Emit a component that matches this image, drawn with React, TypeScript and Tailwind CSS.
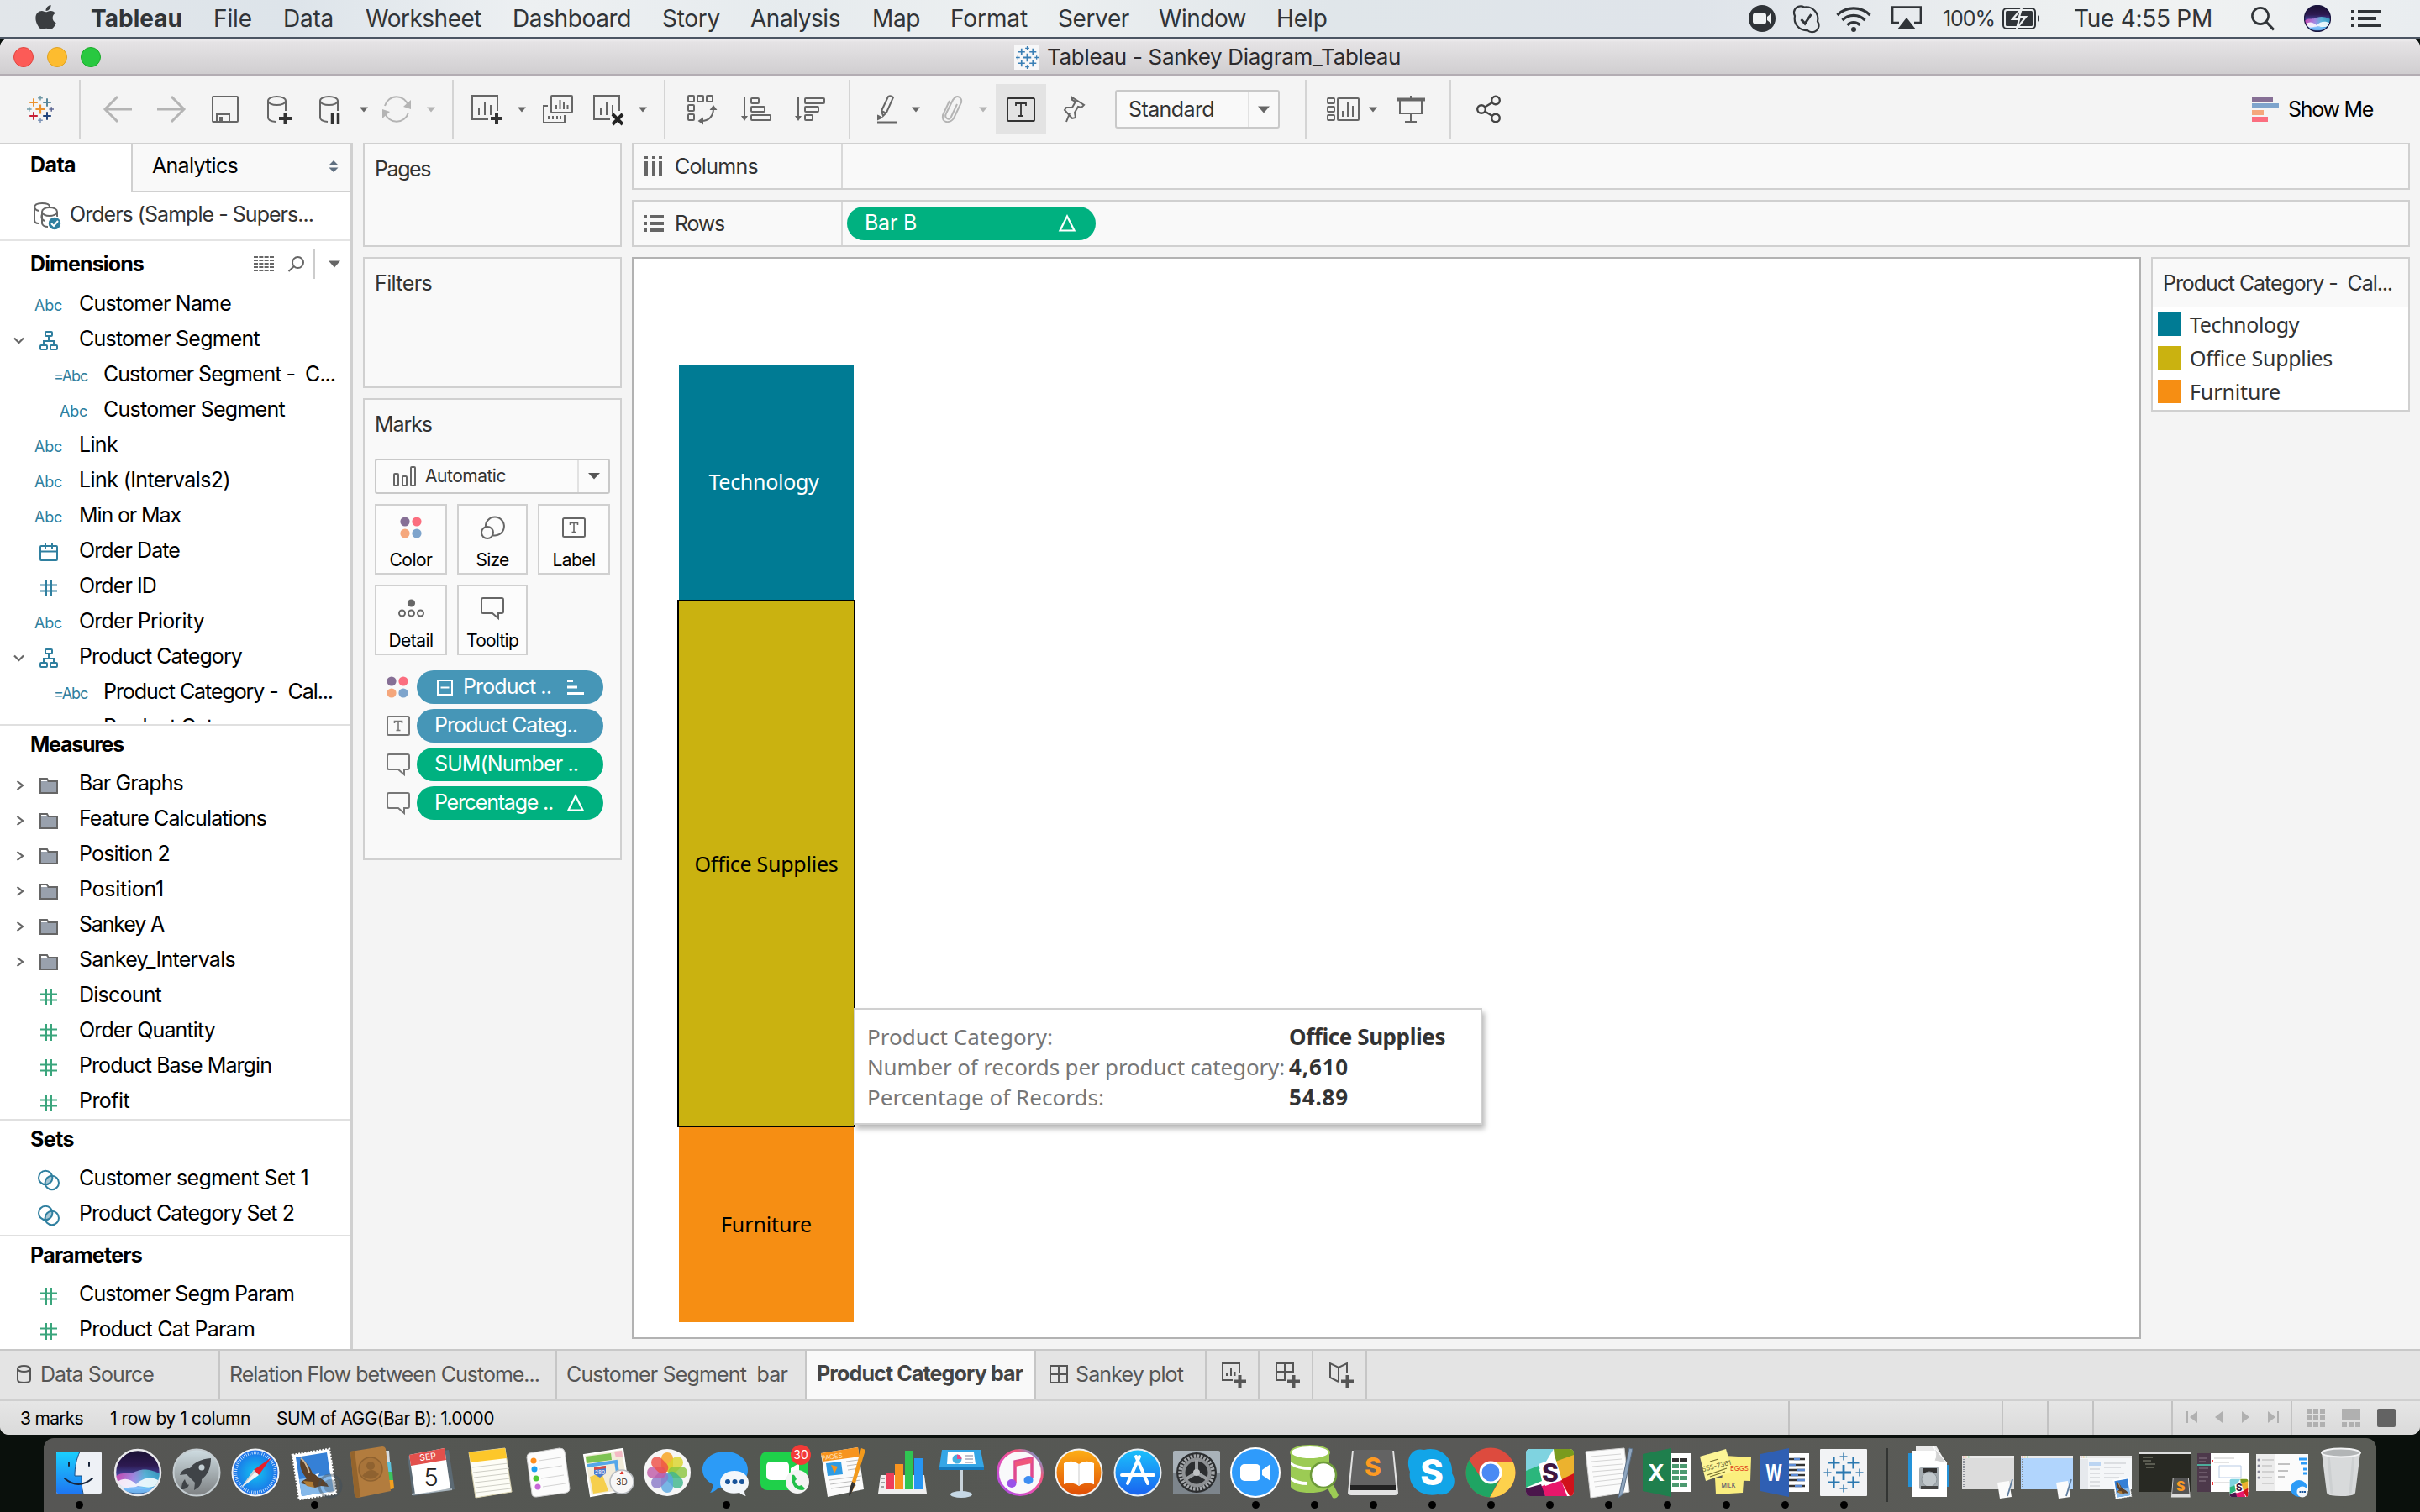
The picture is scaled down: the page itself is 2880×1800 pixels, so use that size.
import React, { useLayoutEffect, useRef } from "react";
import { FaApple } from "react-icons/fa";

/* Text whose letter spacing is adjusted so that it takes a given width. */
function Fit({ w, children, className = "" }: { w: number; children: string; className?: string }) {
  const ref = useRef<HTMLSpanElement>(null);
  useLayoutEffect(() => {
    const el = ref.current;
    if (!el) return;
    el.style.letterSpacing = "0px";
    const natural = el.getBoundingClientRect().width;
    el.style.letterSpacing = `${(w + 2 - natural) / children.length}px`;
  }, [w, children]);
  return (
    <span className={`inline-block shrink-0 leading-none ${className}`}>
      <span ref={ref} className="-mx-[1px] inline-block whitespace-pre leading-none">
        {children}
      </span>
    </span>
  );
}

type SvgProps = { w: number; h: number; className?: string; children: React.ReactNode; sw?: number };
function Ic({ w, h, className = "", children, sw = 2 }: SvgProps) {
  return (
    <svg width={w} height={h} viewBox={`0 0 ${w} ${h}`} fill="none" stroke="currentColor" strokeWidth={sw} className={`block shrink-0 overflow-visible ${className}`}>
      {children}
    </svg>
  );
}

const Caret = ({ className = "" }: { className?: string }) => (
  <Ic w={10} h={7} className={className}>
    <path d="M0 0.5h10l-5 6z" fill="currentColor" stroke="none" />
  </Ic>
);

function plus(x: number, y: number, r: number, c: string, s: number) {
  return <path key={`${x}-${y}`} d={`M${x - r} ${y}h${2 * r}M${x} ${y - r}v${2 * r}`} stroke={c} strokeWidth={s} />;
}

function TableauLogo({ size, mono, className = "" }: { size: number; mono?: string; className?: string }) {
  const c = (v: string) => mono ?? v;
  return (
    <svg width={size} height={size} viewBox="0 0 32 32" className={`block shrink-0 ${className}`}>
      {plus(16, 16, 5.6, c("#eb912b"), 2.2)}
      {plus(8, 8, 4.8, c("#eb912c"), 2)}
      {plus(24, 8, 4.8, c("#59879b"), 2)}
      {plus(8, 24, 4.8, c("#c72035"), 2)}
      {plus(24, 24, 4.8, c("#1f447e"), 2)}
      {plus(16, 2.8, 2.8, c("#7099a6"), 1.5)}
      {plus(16, 29.2, 2.8, c("#7b92b5"), 1.5)}
      {plus(2.8, 16, 2.8, c("#7099a6"), 1.5)}
      {plus(29.2, 16, 2.8, c("#5c6692"), 1.5)}
    </svg>
  );
}

/* ---------- menu bar ---------- */
const menus: [string, number, string][] = [
  ["File", 44, "ml-[39px]"],
  ["Data", 58, "ml-[39px]"],
  ["Worksheet", 136, "ml-[40px]"],
  ["Dashboard", 139, "ml-[39px]"],
  ["Story", 67, "ml-[39px]"],
  ["Analysis", 105, "ml-[38px]"],
  ["Map", 55, "ml-[40px]"],
  ["Format", 90, "ml-[38px]"],
  ["Server", 83, "ml-[38px]"],
  ["Window", 102, "ml-[37px]"],
  ["Help", 59, "ml-[38px]"],
];

function MenuBar() {
  return (
    <div className="flex h-[46px] items-center border-b-2 border-[#4b5563] bg-[linear-gradient(90deg,#e2e6ea_0%,#dde4ea_12%,#edf0f2_22%,#e6ebee_33%,#edf0f1_42%,#e0e6ea_55%,#dfe4ea_70%,#eceff0_84%,#f0f2f2_90%,#e9edf0_100%)] text-[28px] text-[#303438]">
      <FaApple className="-mt-[4px] ml-[40px] h-[33px] w-[29px] shrink-0 text-[#3a3d40]" />
      <Fit w={107} className="ml-[40px] font-bold">Tableau</Fit>
      {menus.map(([t, w, ml]) => (
        <div key={t} className={`flex ${ml}`}>
          <Fit w={w}>{t}</Fit>
        </div>
      ))}
      <div className="mr-[46px] ml-auto flex h-full items-center">
        <Ic w={32} h={32}>
          <circle cx="16" cy="16" r="16" fill="#2f3337" stroke="none" />
          <rect x="5" y="9.5" width="16" height="13" rx="3" fill="#eef1f2" stroke="none" />
          <path d="M22 14l5-4v12l-5-4z" fill="#eef1f2" stroke="none" />
        </Ic>
        <Ic w={33} h={33} className="ml-[20px]" sw={2.2}>
          <path d="M3 13a9 9 0 0 1-1-5 8 8 0 0 1 12-5.500a14 14 0 0 1 16 17 8 8 0 0 1-12 10.500a14 14 0 0 1-15-17z" />
          <path d="M10.500 17l4.500 5 7.500-11" strokeWidth="3" />
        </Ic>
        <Ic w={42} h={31} className="ml-[19px]" sw={3.2}>
          <path d="M1.500 11a27.500 27.500 0 0 1 39 0M7.500 17a19 19 0 0 1 27 0M13.500 22.800a10.600 10.600 0 0 1 15 0" />
          <circle cx="21" cy="28" r="3" fill="currentColor" stroke="none" />
        </Ic>
        <Ic w={36} h={30} className="ml-[24px]" sw={2.4}>
          <path d="M9 20H1.200V1.500h33.600V20H27" />
          <path d="M18 14l11 14H7z" fill="currentColor" stroke="none" />
        </Ic>
        <Fit w={60} className="ml-[26px] text-[25px]">100%</Fit>
        <Ic w={46} h={26} className="ml-[10px]" sw={2}>
          <rect x="1" y="1" width="38" height="24" rx="4" />
          <rect x="4" y="4" width="32" height="18" rx="1.500" fill="currentColor" stroke="none" />
          <path d="M23 1L12 14h8l-3 11 11-14h-8z" fill="currentColor" stroke="#eceff0" strokeWidth="2.200" />
          <path d="M42 9q3.500 4 0 8z" fill="currentColor" stroke="none" />
        </Ic>
        <Fit w={163} className="ml-[40px]">Tue 4:55 PM</Fit>
        <Ic w={28} h={28} className="ml-[47px]" sw={2.6}>
          <circle cx="11" cy="11" r="9.600" />
          <path d="M18 18l9 9.500" strokeWidth="3.200" />
        </Ic>
        <svg width="32" height="32" viewBox="0 0 56 56" className="ml-[35px] block">
          <SiriArt rim="#1b1640" />
        </svg>
        <Ic w={36} h={20} className="ml-[24px]" sw={4}>
          <path d="M0 2h4M8 2h28M0 10h4M8 10h22M0 18h4M8 18h28" />
        </Ic>
      </div>
    </div>
  );
}

function SiriArt({ rim = "#e9e9ec" }: { rim?: string }) {
  return (
    <>
      <defs>
        <linearGradient id="siri" x1="0" y1="0" x2="0" y2="1">
          <stop offset="0" stopColor="#191033" />
          <stop offset="0.35" stopColor="#2d1a50" />
          <stop offset="0.6" stopColor="#4a4fb0" />
          <stop offset="0.85" stopColor="#4b95e0" />
          <stop offset="1" stopColor="#25406f" />
        </linearGradient>
        <linearGradient id="siriwave" x1="0" y1="0" x2="1" y2="0">
          <stop offset="0" stopColor="#ff3fae" />
          <stop offset="0.4" stopColor="#c79cf5" />
          <stop offset="0.65" stopColor="#5fe0ee" />
          <stop offset="1" stopColor="#2fb7c9" />
        </linearGradient>
        <clipPath id="sirc"><circle cx="28" cy="28" r="26" /></clipPath>
      </defs>
      <circle cx="28" cy="28" r="27" fill="url(#siri)" stroke={rim} strokeWidth="2.500" />
      <g clipPath="url(#sirc)">
        <path d="M0 34C8 26 16 30 22 28s14-8 34 2v10c-10 6-16 8-28 8S8 46 0 34z" fill="url(#siriwave)" opacity="0.7" />
        <path d="M2 40c8-6 16-6 24 2 8-8 18-10 28-4-6 10-14 8-26 6-10 5-20 5-26-4z" fill="#fff" opacity="0.85" />
        <path d="M10 48c8-4 26-4 36 0-8 6-28 6-36 0z" fill="#7fc4ff" opacity="0.8" />
      </g>
    </>
  );
}

/* ---------- title bar ---------- */
function TitleBar() {
  return (
    <div className="flex h-[44px] items-center border-b-2 border-[#b3adb3] bg-[linear-gradient(180deg,#f2f0f2_0%,#e5e3e5_10%,#d0ced0_100%)] pt-[2px]">
      <div className="ml-[16px] flex gap-[16px]">
        <div className="size-[24px] rounded-full border border-[#e0443e] bg-[#fc5b57]" />
        <div className="size-[24px] rounded-full border border-[#dea123] bg-[#fdbc2f]" />
        <div className="size-[24px] rounded-full border border-[#1aab29] bg-[#28c840]" />
      </div>
      <div className="ml-[1087px] flex size-[30px] items-center justify-center bg-[#f7f7f8]">
        <TableauLogo size={27} mono="#3a7fb5" />
      </div>
      <Fit w={419} className="ml-[10px] text-[26px] text-[#2c2a2c]">Tableau - Sankey Diagram_Tableau</Fit>
    </div>
  );
}

/* ---------- toolbar ---------- */
const Sep = ({ className }: { className: string }) => <div className={`h-[70px] w-[2px] shrink-0 bg-[#d4d4d4] ${className}`} />;

const Share = () => (
  <Ic w={29} h={32} className="ml-[30px] text-[#444]" sw={2.4}>
    <circle cx="6" cy="16" r="4.800" />
    <circle cx="23" cy="5.500" r="4.800" />
    <circle cx="23" cy="26.500" r="4.800" />
    <path d="M10 13.500L19 8M10 18.500l9 5.500" />
  </Ic>
);

function Toolbar() {
  return (
    <div className="flex h-[80px] items-center text-[#666]">
      <TableauLogo size={32} className="ml-[32px]" />
      <Sep className="ml-[30px]" />
      <Ic w={34} h={32} className="ml-[27px] text-[#b4b4b4]" sw={3}>
        <path d="M34 16H2M17 1L2 16l15 15" />
      </Ic>
      <Ic w={34} h={32} className="ml-[30px] text-[#b4b4b4]" sw={3}>
        <path d="M0 16h32M17 1l15 15-15 15" />
      </Ic>
      <Ic w={32} h={32} className="ml-[31px]">
        <rect x="1" y="1" width="30" height="30" rx="1" />
        <path d="M6 31v-9h15v9M10 31v-5h2v5z" />
      </Ic>
      <Ic w={30} h={33} className="ml-[34px]">
        <ellipse cx="11.500" cy="6" rx="10.500" ry="5" />
        <path d="M1 6v20c0 3 4 4.500 9 5M22 6v12" />
        <path d="M14 27h15M21.500 20v14" stroke="#333" strokeWidth="4" />
      </Ic>
      <Ic w={26} h={33} className="ml-[32px]">
        <ellipse cx="11.500" cy="6" rx="10.500" ry="5" />
        <path d="M1 6v20c0 3 4 4.500 9 5M22 6v12" />
        <path d="M15.500 21v13M22.500 21v13" stroke="#333" strokeWidth="3.500" />
      </Ic>
      <Caret className="ml-[22px]" />
      <Ic w={34} h={32} className="ml-[17px] text-[#b4b4b4]">
        <path d="M3 12A14.500 14.500 0 0 1 31 12M31 20A14.500 14.500 0 0 1 3 20" />
        <path d="M34 5v11l-9-3zM0 27V16l9 3z" fill="currentColor" stroke="none" />
      </Ic>
      <Caret className="ml-[19px] text-[#b4b4b4]" />
      <Sep className="ml-[20px]" />
      <Ic w={37} h={34} className="ml-[21px]">
        <path d="M20 29H1V1h30v18M9 24v-8M16 24V8M23 24v-12" />
        <path d="M23 28h14M30 21v14" stroke="#333" strokeWidth="4" />
      </Ic>
      <Caret className="ml-[18px]" />
      <Ic w={36} h={34} className="ml-[20px]">
        <rect x="10" y="1" width="25" height="20" rx="1" />
        <path d="M16 17v-5M20.500 17V6M25 17V9M29.500 17v-5M6 13H1v20h25v-9M7 29v-4M12 29v-4M17 29v-4M21 29v-4" />
      </Ic>
      <Ic w={37} h={34} className="ml-[24px]">
        <path d="M20 29H1V1h30v18M9 24v-8M16 24V8M23 24v-12" />
        <path d="M23 23l12 12M35 23L23 35" stroke="#222" strokeWidth="4" />
      </Ic>
      <Caret className="ml-[17px]" />
      <Sep className="ml-[20px]" />
      <Ic w={35} h={34} className="ml-[26px]">
        <rect x="1" y="1" width="7" height="7" rx="1" />
        <rect x="12" y="1" width="7" height="7" rx="1" />
        <rect x="23" y="1" width="7" height="7" rx="1" />
        <rect x="1" y="12" width="7" height="7" rx="1" />
        <rect x="1" y="23" width="7" height="7" rx="1" />
        <path d="M17 31c8 0 14-5 14-15" />
        <path d="M26.500 18l4.500-6 4.500 6zM19 26.500L12.500 31l6.500 4.500z" fill="currentColor" stroke="none" />
      </Ic>
      <Ic w={36} h={30} className="ml-[29px]">
        <path d="M4 0v26" />
        <path d="M0 23h8l-4 6z" fill="currentColor" stroke="none" />
        <rect x="12" y="2" width="9" height="6" rx="1" />
        <rect x="12" y="12" width="16" height="6" rx="1" />
        <rect x="12" y="22" width="23" height="6" rx="1" />
      </Ic>
      <Ic w={36} h={30} className="ml-[28px]">
        <path d="M4 0v26" />
        <path d="M0 23h8l-4 6z" fill="currentColor" stroke="none" />
        <rect x="12" y="2" width="23" height="6" rx="1" />
        <rect x="12" y="12" width="16" height="6" rx="1" />
        <rect x="12" y="22" width="9" height="6" rx="1" />
      </Ic>
      <Sep className="ml-[28px]" />
      <Ic w={24} h={34} className="ml-[32px]">
        <path d="M5 19L13 2q3-2 6 1l-8 18-4 4z M5 19l6 3" />
        <path d="M1 25l4 2-4 2z" fill="currentColor" />
        <path d="M0 33h23" strokeWidth="3" />
      </Ic>
      <Caret className="ml-[17px]" />
      <Ic w={24} h={32} className="ml-[26px] text-[#b4b4b4]">
        <path d="M18 10L11 25q-2 4-5 2t-1-6L13 5q4-6 8-3t1 8L14 27q-4 5-9 4t-4-8L9 6" />
      </Ic>
      <Caret className="ml-[20px] text-[#b4b4b4]" />
      <div className="ml-[10px] flex size-[60px] shrink-0 items-center justify-center bg-[#e3e3e3] text-[#333]">
        <Ic w={34} h={29}>
          <rect x="1" y="1" width="32" height="27" rx="1.500" />
          <path d="M11 10V7h12v3M17 7v15M14 22h6" strokeWidth="1.800" />
        </Ic>
      </div>
      <Ic w={26} h={32} className="ml-[20px]">
        <path d="M11 2l14 9-3 3-4-1-4 7 1 6-4 1L2 17l2-3 7 0 4-7-4-2zM8 21L4 31" />
      </Ic>
      <div className="ml-[36px] flex h-[46px] w-[196px] shrink-0 items-center rounded-[3px] border-2 border-[#c9c9c9] bg-[#f9f9f9]">
        <Fit w={100} className="ml-[15px] text-[25px] text-[#333]">Standard</Fit>
        <div className="ml-auto flex h-full w-[36px] items-center justify-center border-l-2 border-[#e2e2e2]">
          <Ic w={14} h={9}>
            <path d="M0 0.500h14l-7 8z" fill="currentColor" stroke="none" />
          </Ic>
        </div>
      </div>
      <Sep className="ml-[30px]" />
      <Ic w={39} h={28} className="ml-[24px]">
        <rect x="1" y="1" width="8" height="6" rx="1" />
        <rect x="1" y="11" width="8" height="6" rx="1" />
        <rect x="1" y="21" width="8" height="6" rx="1" />
        <rect x="13" y="1" width="25" height="26" rx="1" />
        <path d="M19 23v-7M25 23V6M31 23V10" />
      </Ic>
      <Caret className="ml-[11px]" />
      <Ic w={34} h={32} className="ml-[23px]">
        <path d="M0 4.500h34" strokeWidth="4" />
        <path d="M17 0v4M4 6v15h26V6M17 21v10M10 31h14" />
      </Ic>
      <Sep className="ml-[29px]" />
      <Share />
      <div className="mr-[57px] ml-auto flex items-center">
        <Ic w={33} h={30} sw={6}>
          <path d="M0 3h25" stroke="#866f95" />
          <path d="M0 11h32" stroke="#7ea4cc" />
          <path d="M0 19h14" stroke="#f5a77c" />
          <path d="M0 27h19" stroke="#fb6e7f" />
        </Ic>
        <Fit w={99} className="ml-[11px] text-[25px] text-black">Show Me</Fit>
      </div>
    </div>
  );
}

/* ---------- data pane ---------- */
type Kind = "abc" | "eabc" | "nabc" | "hier" | "date" | "num" | "gnum" | "folder" | "set";

function FieldIcon({ kind }: { kind: Kind }) {
  switch (kind) {
    case "abc":
      return <Fit w={31} className="mt-[4px] ml-[42px] text-[18px]">Abc</Fit>;
    case "nabc":
      return <Fit w={31} className="mt-[4px] ml-[72px] text-[18px]">Abc</Fit>;
    case "eabc":
      return <Fit w={38} className="mt-[4px] ml-[65px] text-[18px]">=Abc</Fit>;
    case "hier":
      return (
        <>
          <Ic w={13} h={9} className="mt-[2px] ml-[16px] text-[#666]" sw={2.2}>
            <path d="M1 1.500l5.500 5.500L12 1.500" />
          </Ic>
          <Ic w={22} h={23} className="mt-[2px] ml-[18px]">
            <rect x="7" y="1" width="8" height="5" rx="1" />
            <path d="M11 6v6M5 17v-5h12v5" />
            <rect x="1" y="17" width="8" height="5" rx="1" />
            <rect x="13" y="17" width="8" height="5" rx="1" />
          </Ic>
        </>
      );
    case "date":
      return (
        <Ic w={22} h={20} className="mt-[2px] ml-[47px]">
          <rect x="1" y="3" width="20" height="17" rx="1" />
          <path d="M1 9.500h20M7 0v6M15 0v6" />
        </Ic>
      );
    case "num":
    case "gnum":
      return (
        <Ic w={20} h={20} className="mt-[4px] ml-[48px]">
          <path d="M0 6.500h20M0 13.500h20M7 0v20M13 0v20" />
        </Ic>
      );
    case "folder":
      return (
        <>
          <Ic w={8} h={12} className="mt-[3px] ml-[20px] text-[#666]" sw={2.2}>
            <path d="M0.500 1L7 6l-6.500 5" />
          </Ic>
          <Ic w={22} h={20} className="mt-[4px] ml-[19px] text-[#666]">
            <path d="M1 19V2h8l1.500 3H21v14z" fill="#99a1ad" />
            <path d="M2 3h6l1.500 2H2z" fill="#fff" stroke="none" />
          </Ic>
        </>
      );
    default:
      return (
        <Ic w={26} h={24} className="mt-[4px] ml-[45px]">
          <path d="M17 7a8 8 0 0 1-8 9.500 8 8 0 0 1 8-9.500z" fill="#a9c8d6" stroke="none" />
          <circle cx="9.200" cy="9" r="8.200" />
          <circle cx="16.800" cy="15" r="8.200" />
        </Ic>
      );
  }
}

type Field = [Kind, string, number];
const dimensions: Field[] = [
  ["abc", "Customer Name", 179],
  ["hier", "Customer Segment", 213],
  ["eabc", "Customer Segment -  C...", 274],
  ["nabc", "Customer Segment", 214],
  ["abc", "Link", 44],
  ["abc", "Link (Intervals2)", 178],
  ["abc", "Min or Max", 119],
  ["date", "Order Date", 118],
  ["num", "Order ID", 90],
  ["abc", "Order Priority", 147],
  ["hier", "Product Category", 192],
  ["eabc", "Product Category -  Cal...", 271],
  ["nabc", "Product Category", 192],
];
const measures: Field[] = [
  ["folder", "Bar Graphs", 122],
  ["folder", "Feature Calculations", 221],
  ["folder", "Position 2", 106],
  ["folder", "Position1", 99],
  ["folder", "Sankey A", 99],
  ["folder", "Sankey_Intervals", 184],
  ["gnum", "Discount", 96],
  ["gnum", "Order Quantity", 160],
  ["gnum", "Product Base Margin", 227],
  ["gnum", "Profit", 58],
];
const sets: Field[] = [
  ["set", "Customer segment Set 1", 271],
  ["set", "Product Category Set 2", 254],
];
const params: Field[] = [
  ["gnum", "Customer Segm Param", 254],
  ["gnum", "Product Cat Param", 207],
];

function Fields({ items }: { items: Field[] }) {
  return (
    <>
      {items.map(([kind, text, w], i) => (
        <div key={i} className="flex h-[42px] shrink-0 items-center">
          <div className={`flex shrink-0 items-center ${kind === "eabc" || kind === "nabc" ? "w-[124px]" : "w-[95px]"} ${kind === "gnum" ? "text-[#3aa57c]" : "text-[#2f7f9f]"}`}>
            <FieldIcon kind={kind} />
          </div>
          <Fit w={w} className="-mt-[1px] text-[25px] text-black">{text}</Fit>
        </div>
      ))}
    </>
  );
}

const Head = ({ t, w }: { t: string; w: number }) => (
  <div className="flex h-[48px] shrink-0 items-center pl-[37px]">
    <Fit w={w} className="-mt-[3px] text-[25px] font-bold text-black">{t}</Fit>
  </div>
);

function DataPane() {
  return (
    <div className="flex h-full w-[420px] shrink-0 flex-col border-t-2 border-r-[3px] border-[#d0d0d0] bg-white">
      <div className="flex h-[57px] shrink-0">
        <div className="flex w-[156px] items-center pb-[9px] pl-[37px]">
          <Fit w={52} className="text-[25px] font-bold text-black">Data</Fit>
        </div>
        <div className="flex flex-1 items-center border-b-2 border-l-2 border-[#d0d0d0] bg-[#f9f9f9] pb-[4px] pl-[24px]">
          <Fit w={100} className="text-[25px] text-black">Analytics</Fit>
          <Ic w={12} h={14} className="mr-[14px] ml-auto text-[#5f6f80]">
            <path d="M6 0l5.500 5.500H0.500zM6 14l5.500-5.500H0.500z" fill="currentColor" stroke="none" />
          </Ic>
        </div>
      </div>
      <div className="flex h-[58px] shrink-0 items-center border-b-2 border-[#e4e4e4] pl-[40px]">
        <Ic w={33} h={33} className="text-[#666]">
          <path d="M1 6v15q0 4 5 4M1 6q0-5 9-5t9 4M1 6q1 3 5 4" />
          <ellipse cx="19" cy="11" rx="9" ry="5" />
          <path d="M10 11v14q1 4 7 4M28 11v6M10 14q-2 6 3 8" />
          <circle cx="25" cy="25" r="8" fill="#2f7f9f" stroke="#fff" strokeWidth="1.500" />
          <path d="M21 25l3 3 5-6" stroke="#fff" />
        </Ic>
        <Fit w={288} className="-mt-[3px] ml-[11px] text-[25px] text-[#333]">Orders (Sample - Supers...</Fit>
      </div>
      <div className="flex h-[54px] shrink-0 items-center pl-[37px]">
        <Fit w={133} className="text-[25px] font-bold text-black">Dimensions</Fit>
        <Ic w={24} h={18} className="ml-[132px] text-[#666]">
          <path d="M0 1h24M0 5h24M0 9h24M0 13h24M0 17h24" strokeDasharray="5 1.330" />
        </Ic>
        <Ic w={19} h={19} className="ml-[17px] text-[#666]">
          <circle cx="11.500" cy="7.500" r="6.500" />
          <path d="M7 12l-6.500 6" />
        </Ic>
        <div className="ml-[11px] h-[36px] w-[2px] bg-[#ccc]" />
        <Ic w={14} h={9} className="ml-[16px] text-[#666]">
          <path d="M0 0.500h14l-7 8z" fill="currentColor" stroke="none" />
        </Ic>
      </div>
      <div className="h-[518px] shrink-0 overflow-hidden">
        <Fields items={dimensions} />
      </div>
      <div className="h-[3px] shrink-0" />
      <div className="h-[2px] shrink-0 bg-[#e0e0e0]" />
      <Head t="Measures" w={109} />
      <Fields items={measures} />
      <div className="h-[2px] shrink-0 bg-[#e0e0e0]" />
      <Head t="Sets" w={50} />
      <Fields items={sets} />
      <div className="mt-[4px] h-[2px] shrink-0 bg-[#e0e0e0]" />
      <Head t="Parameters" w={131} />
      <Fields items={params} />
    </div>
  );
}

/* ---------- cards column ---------- */
const Dots = () => (
  <Ic w={26} h={26}>
    <g stroke="none">
      <circle cx="6" cy="6" r="5.600" fill="#866f95" />
      <circle cx="20" cy="6" r="5.600" fill="#fb6e7f" />
      <circle cx="6" cy="20" r="5.600" fill="#f5a77c" />
      <circle cx="20" cy="20" r="5.600" fill="#7ea4cc" />
    </g>
  </Ic>
);
const TBox = () => (
  <Ic w={28} h={24}>
    <rect x="1" y="1" width="26" height="22" rx="1.500" />
    <path d="M9.500 9V6.500h9V9M14 6.500v11M11.500 17.500h5" strokeWidth="1.600" />
  </Ic>
);
const Bubble = () => (
  <Ic w={28} h={26}>
    <path d="M3 1h22q2 0 2 2v14q0 2-2 2h-4v6l-7-6H3q-2 0-2-2V3q0-2 2-2z" />
  </Ic>
);
const SizeIc = () => (
  <Ic w={28} h={27}>
    <path d="M6 13a11 11 0 1 1 7.500 9" />
    <circle cx="8" cy="19" r="7" />
  </Ic>
);
const DetailIc = () => (
  <Ic w={31} h={22}>
    <circle cx="15.500" cy="5" r="4.600" fill="currentColor" stroke="none" />
    <circle cx="4.500" cy="17" r="3.500" />
    <circle cx="15.500" cy="17" r="3.500" />
    <circle cx="26.500" cy="17" r="3.500" />
  </Ic>
);
const Tri = () => (
  <Ic w={20} h={20} sw={2.2} className="text-white">
    <path d="M10 1.500L18.500 18.500h-17z" />
  </Ic>
);

function MarkBtn({ icon, t, w, cls }: { icon: React.ReactNode; t: string; w: number; cls: string }) {
  return (
    <div className={`flex h-[84px] flex-col items-center border-2 border-[#d0d0d0] bg-[#fcfcfc] ${cls}`}>
      <div className="mt-[12px] flex h-[28px] items-center">{icon}</div>
      <div className="mt-[14px] flex">
        <Fit w={w} className="text-[21px] text-black">{t}</Fit>
      </div>
    </div>
  );
}

function MarkPill({ icon, color, children }: { icon: React.ReactNode; color: string; children: React.ReactNode }) {
  return (
    <div className="flex h-[40px] items-center">
      <div className="flex w-[36px] items-center text-[#777]">{icon}</div>
      <div className={`flex h-[40px] w-[222px] items-center rounded-full pl-[22px] text-[25px] text-white ${color}`}>{children}</div>
    </div>
  );
}

function Cards() {
  return (
    <div className="ml-[12px] flex w-[308px] shrink-0 flex-col gap-[12px] text-[#333]">
      <div className="flex h-[124px] items-start border-2 border-[#d0d0d0] bg-[#f9f9f9] pt-[17px] pl-[13px]">
        <Fit w={64} className="text-[25px]">Pages</Fit>
      </div>
      <div className="flex h-[156px] items-start border-2 border-[#d0d0d0] bg-[#f9f9f9] pt-[17px] pl-[13px]">
        <Fit w={66} className="text-[25px]">Filters</Fit>
      </div>
      <div className="h-[550px] border-2 border-[#d0d0d0] bg-[#f9f9f9] pl-[12px]">
        <div className="flex h-[70px] items-center pb-[11px]">
          <Fit w={66} className="ml-[1px] text-[25px]">Marks</Fit>
        </div>
        <div className="flex h-[42px] w-[280px] items-center rounded-[3px] border-2 border-[#c9c9c9] bg-[#fbfbfb]">
          <Ic w={28} h={24} className="ml-[20px] text-[#666]">
            <rect x="1" y="9" width="5" height="14" rx="1" />
            <rect x="11" y="12" width="5" height="11" rx="1" />
            <rect x="21" y="1" width="5" height="22" rx="1" />
          </Ic>
          <Fit w={94} className="-mt-[1px] ml-[11px] text-[21px]">Automatic</Fit>
          <div className="ml-auto flex h-full w-[37px] items-center justify-center border-l-2 border-[#e2e2e2] text-[#555]">
            <Ic w={14} h={8}>
              <path d="M0 0h14l-7 7.500z" fill="currentColor" stroke="none" />
            </Ic>
          </div>
        </div>
        <div className="mt-[12px] flex w-[280px] flex-wrap gap-[12px] text-[#666]">
          <MarkBtn icon={<Dots />} t="Color" w={49} cls="w-[86px]" />
          <MarkBtn icon={<SizeIc />} t="Size" w={37} cls="w-[84px]" />
          <MarkBtn icon={<TBox />} t="Label" w={49} cls="w-[86px]" />
          <MarkBtn icon={<DetailIc />} t="Detail" w={51} cls="w-[86px]" />
          <MarkBtn icon={<Bubble />} t="Tooltip" w={60} cls="w-[84px]" />
        </div>
        <div className="mt-[18px] ml-[14px] flex flex-col gap-[6px]">
          <MarkPill icon={<Dots />} color="bg-[#4696b7]">
            <Ic w={19} h={19} className="ml-[2px]">
              <path d="M1 1h17v17H1zM4.500 9.500h10" />
            </Ic>
            <Fit w={103} className="-mt-[1px] ml-[13px]">Product ..</Fit>
            <Ic w={20} h={20} className="ml-[20px]" sw={3.2}>
              <path d="M0 2.500h7M0 10h12M0 17.500h20" />
            </Ic>
          </MarkPill>
          <MarkPill icon={<TBox />} color="bg-[#4696b7]">
            <Fit w={168} className="-mt-[1px]">Product Categ..</Fit>
          </MarkPill>
          <MarkPill icon={<Bubble />} color="bg-[#00b180]">
            <Fit w={169} className="-mt-[1px]">SUM(Number ..</Fit>
          </MarkPill>
          <MarkPill icon={<Bubble />} color="bg-[#00b180]">
            <Fit w={139} className="-mt-[1px] mr-[18px]">Percentage ..</Fit>
            <Tri />
          </MarkPill>
        </div>
      </div>
    </div>
  );
}

/* ---------- view ---------- */
function Shelf({ icon, t, w, children }: { icon: React.ReactNode; t: string; w: number; children?: React.ReactNode }) {
  return (
    <div className="flex h-[56px] items-center border-2 border-[#d0d0d0] bg-[#f9f9f9]">
      <div className="flex h-full w-[249px] shrink-0 items-center border-r-2 border-[#d9d9d9] pl-[12px]">
        <div className="w-[38px] text-[#666]">{icon}</div>
        <Fit w={w} className="text-[25px] text-[#333]">{t}</Fit>
      </div>
      {children}
    </div>
  );
}

function Chart() {
  return (
    <div className="relative h-[1288px] w-[1796px] shrink-0 border-2 border-[#b2b2b2] bg-white">
      <div className="mt-[126px] ml-[54px] flex w-[208px] flex-col font-['Noto_Sans','Open_Sans',sans-serif] text-[25px]">
        <div className="flex h-[280px] items-center justify-center bg-[#007b94] text-white">
          <Fit w={129} className="mt-[-2px] -ml-[6px]">Technology</Fit>
        </div>
        <div className="-mx-[2px] flex h-[628px] items-center justify-center border-2 border-black bg-[#cab210] text-black">
          <Fit w={169}>Office Supplies</Fit>
        </div>
        <div className="flex h-[232px] items-center justify-center bg-[#f68e13] text-black">
          <Fit w={106} className="-mt-[2px]">Furniture</Fit>
        </div>
      </div>
      <div className="absolute top-[892px] left-[262px] grid h-[139px] w-[748px] grid-cols-[502px_auto] grid-rows-[36px_36px_36px] items-center border-2 border-[#d0d0d0] bg-white pt-[14px] pl-[15px] font-['Noto_Sans','Open_Sans',sans-serif] text-[26px] text-[#777] shadow-[3px_5px_6px_rgba(0,0,0,0.28)]">
        <div className="flex"><Fit w={219}>Product Category:</Fit></div>
        <div className="flex font-bold text-[#333]"><Fit w={184}>Office Supplies</Fit></div>
        <div className="flex"><Fit w={495}>Number of records per product category:</Fit></div>
        <div className="flex font-bold text-[#333]"><Fit w={69}>4,610</Fit></div>
        <div className="flex"><Fit w={280}>Percentage of Records:</Fit></div>
        <div className="flex font-bold text-[#333]"><Fit w={69}>54.89</Fit></div>
      </div>
    </div>
  );
}

function Legend() {
  return (
    <div className="flex h-[184px] w-[308px] shrink-0 flex-col border-2 border-[#d0d0d0] bg-white text-[#333]">
      <div className="flex h-[58px] items-center bg-[#f9f9f9] pl-[13px]">
        <Fit w={271} className="text-[25px]">Product Category -  Cal...</Fit>
      </div>
      <div className="flex flex-col gap-[12px] pt-[6px] pl-[6px] font-['Noto_Sans','Open_Sans',sans-serif] text-[25px]">
        <div className="flex h-[28px] items-center gap-[11px]"><div className="size-[28px] bg-[#007b94]" /><Fit w={128}>Technology</Fit></div>
        <div className="flex h-[28px] items-center gap-[11px]"><div className="size-[28px] bg-[#cab210]" /><Fit w={168}>Office Supplies</Fit></div>
        <div className="flex h-[28px] items-center gap-[11px]"><div className="size-[28px] bg-[#f68e13]" /><Fit w={106}>Furniture</Fit></div>
      </div>
    </div>
  );
}

function Workspace() {
  return (
    <div className="ml-[12px] flex w-[2116px] shrink-0 flex-col gap-[12px]">
      <Shelf
        t="Columns"
        w={97}
        icon={
          <Ic w={24} h={24} sw={4} className="text-[#666]">
            <path d="M3 0v3M12 0v3M20 0v3M3 6v18M12 6v18M20 6v18" />
          </Ic>
        }
      />
      <Shelf
        t="Rows"
        w={57}
        icon={
          <Ic w={24} h={20} sw={4} className="text-[#666]">
            <path d="M0 2h4M7 2h17M0 10h4M7 10h17M0 18h4M7 18h17" />
          </Ic>
        }
      >
        <div className="ml-[5px] flex h-[40px] w-[296px] items-center rounded-full bg-[#00b180] pl-[22px] text-[25px] text-white">
          <Fit w={60} className="-mt-[1px]">Bar B</Fit>
          <div className="mr-[24px] ml-auto"><Tri /></div>
        </div>
      </Shelf>
      <div className="flex gap-[12px]">
        <Chart />
        <Legend />
      </div>
    </div>
  );
}

/* ---------- bottom bars ---------- */
function SheetTabs() {
  const div = "border-r-2 border-[#c6c6c6]";
  return (
    <div className="flex h-[62px] shrink-0 border-t-2 border-b-[3px] border-t-[#c8c8c8] border-b-[#cfcfcf] bg-[#e4e4e4] text-[25px] text-[#555]">
      <div className={`flex w-[262px] items-center pl-[20px] ${div}`}>
        <Ic w={17} h={22} className="-mt-[2px]">
          <ellipse cx="8.500" cy="4.500" rx="7.500" ry="3.500" />
          <path d="M1 4.500v13q0 3.500 7.500 3.500t7.500-3.500v-13" />
        </Ic>
        <Fit w={133} className="ml-[12px]">Data Source</Fit>
      </div>
      <div className={`flex w-[401px] items-center pl-[12px] ${div}`}><Fit w={367}>Relation Flow between Custome...</Fit></div>
      <div className={`flex w-[297px] items-center pl-[12px] ${div}`}><Fit w={261}>Customer Segment  bar</Fit></div>
      <div className={`flex w-[273px] items-center bg-[#f9f9f9] pb-[2px] pl-[13px] font-bold text-[#444] ${div}`}><Fit w={243}>Product Category bar</Fit></div>
      <div className={`flex w-[203px] items-center pl-[16px] ${div}`}>
        <Ic w={22} h={22} className="-mt-[2px]">
          <path d="M1 1h20v20H1zM1 11h20M11 1v20" />
        </Ic>
        <Fit w={126} className="ml-[10px]">Sankey plot</Fit>
      </div>
      <div className={`flex w-[63px] items-center pl-[18px] ${div}`}>
        <Ic w={30} h={29}>
          <path d="M13 21H1V1h20v11M6 16v-4M11 16V7M15.500 16v-5" />
          <path d="M14 22.500h15M21.500 15v15" strokeWidth="4" />
        </Ic>
      </div>
      <div className={`flex w-[64px] items-center pl-[19px] ${div}`}>
        <Ic w={30} h={29}>
          <path d="M13 21H1V1h20v11M1 11h20M11 1v20" />
          <path d="M14 22.500h15M21.500 15v15" strokeWidth="4" />
        </Ic>
      </div>
      <div className={`flex w-[64px] items-center pl-[19px] ${div}`}>
        <Ic w={30} h={29}>
          <path d="M11 23L1 18V1l10 5 10-5v12M11 6v17" />
          <path d="M14 22.500h15M21.500 15v15" strokeWidth="4" />
        </Ic>
      </div>
    </div>
  );
}

function StatusBar() {
  return (
    <div className="flex h-[40px] shrink-0 items-center bg-[linear-gradient(180deg,#e6e6e6,#dadada)] text-[21px] text-black">
      <Fit w={73} className="ml-[25px]">3 marks</Fit>
      <Fit w={165} className="ml-[34px]">1 row by 1 column</Fit>
      <Fit w={257} className="ml-[33px]">SUM of AGG(Bar B): 1.0000</Fit>
      <div className="ml-auto flex h-full shrink-0 text-[#b0b0b0]">
        <div className="w-[254px] border-l-2 border-[#c2c2c2]" />
        <div className="w-[54px] border-l-2 border-[#c2c2c2]" />
        <div className="w-[54px] border-l-2 border-[#c2c2c2]" />
        <div className="w-[94px] border-l-2 border-[#c2c2c2]" />
        <div className="flex w-[142px] items-center border-l-2 border-[#c2c2c2]">
          <Ic w={13} h={14} className="-mt-[2px] ml-[16px]"><path d="M1 0v14" /><path d="M13 0v14L4 7z" fill="currentColor" stroke="none" /></Ic>
          <Ic w={9} h={14} className="-mt-[2px] ml-[21px]"><path d="M9 0v14L0 7z" fill="currentColor" stroke="none" /></Ic>
          <Ic w={9} h={14} className="-mt-[2px] ml-[23px]"><path d="M0 0v14l9-7z" fill="currentColor" stroke="none" /></Ic>
          <Ic w={13} h={14} className="-mt-[2px] ml-[22px]"><path d="M12 0v14" /><path d="M0 0v14l9-7z" fill="currentColor" stroke="none" /></Ic>
        </div>
        <div className="flex w-[154px] items-center border-l-2 border-[#c2c2c2] pl-[17px]">
          <Ic w={22} h={22} sw={6}><path d="M0 3h22M0 11h22M0 19h22" strokeDasharray="6 2" /></Ic>
          <Ic w={22} h={22} sw={6} className="ml-[20px]"><path d="M0 0h22v14H0z" fill="currentColor" stroke="none" /><path d="M0 19h22" strokeDasharray="6 2" /></Ic>
          <div className="ml-[20px] size-[22px] rounded-[2px] bg-[#636363]" />
        </div>
      </div>
    </div>
  );
}

/* ---------- dock ---------- */
const sans = "Inter, 'Liberation Sans', sans-serif";

function Bird({ s = 1 }: { s?: number }) {
  return (
    <g transform={`scale(${s})`}>
      <path d="M9 14l44-7 8 53-44 7z" fill="#fff" stroke="#fff" strokeWidth="2.500" strokeDasharray="2 1.600" />
      <path d="M13 17l37-6 7 46-37 6z" fill="#3580d6" />
      <path d="M17 43l38-6 3 20-38 6z" fill="#86b9ea" />
      <path d="M19 18c4 2 11 10 14 18l4 2c4 4 12 6 15 14l-9-1-7 2-9-3-7-2c-2-2 3-4 6-6-5-6-10-14-7-24z" fill="#5c4129" />
      <path d="M19 18c4 3 8 10 10 17" stroke="#cdb79a" strokeWidth="2" fill="none" />
      <path d="M22 45l11 1 2 7-9-2z" fill="#b07b35" />
      <path d="M36 37l5-1-2 4z" fill="#fff" />
    </g>
  );
}

function SlackArt() {
  return (
    <>
      <rect x="7" y="7" width="57" height="56" rx="5" fill="#fff" />
      <path d="M12 7h28L26 30 7 36V12q0-5 5-5z" fill="#7fd3e0" />
      <path d="M7 33l15-6 4 18-19 8z" fill="#2bb67c" />
      <path d="M40 7h19q5 0 5 5v4l-22 8z" fill="#7a9b1e" />
      <path d="M42 22l22-8v28l-16 6z" fill="#ecb22e" />
      <path d="M24 52l24-10 8 21H30z" fill="#e8176b" />
      <path d="M48 44l16-8v22q0 5-5 5z" fill="#d0121b" />
      <path d="M7 54l18-5 5 14H12q-5 0-5-5z" fill="#4a154b" />
      <path d="M22 25l20-7 8 26-20 7z" fill="#fff" />
      <text x="36" y="46" textAnchor="middle" fontFamily={sans} fontSize="30" fontWeight="800" fill="#3f1640">S</text>
    </>
  );
}

function PagesSheet() {
  return (
    <>
      <path d="M8 10l46-4 6 52-46 7z" fill="#fbfbfb" stroke="#d2d2d2" />
      <path d="M14 16l36-3M15 22l36-3M16 28l36-3M16 34l36-3M17 40l36-4M18 46l36-4M19 52l36-4" stroke="#d5d5d5" />
      <path d="M60 6l4 1-12 54-5 4z" fill="#8fa6bf" stroke="#5a6f88" />
    </>
  );
}

const office = (c: string, l: string, extra: React.ReactNode) => (
  <>
    <path d="M36 12h28v46H36z" fill="#fff" />
    {extra}
    <path d="M6 13l34-7v58L6 57z" fill={c} />
    <text x="22" y="45" textAnchor="middle" fontFamily={sans} fontSize="27" fontWeight="700" fill="#fff" textLength="20" lengthAdjust="spacingAndGlyphs">{l}</text>
  </>
);

const dock: { art: React.ReactNode; dot?: boolean }[] = [
  {
    dot: true,
    art: (
      <>
        <defs><linearGradient id="fnd" x1="0" y1="0" x2="0" y2="1"><stop offset="0" stopColor="#1ad0fd" /><stop offset="1" stopColor="#1e76f2" /></linearGradient></defs>
        <rect x="8" y="10" width="54" height="50" rx="2" fill="#eef1f6" />
        <path d="M10 10h26c-4 9-6 18-6 29h8c0 8 0 13 2 21H10q-2 0-2-2V12q0-2 2-2z" fill="url(#fnd)" />
        <path d="M36 10c-4 9-6 18-6 29h8c0 8 0 13 2 21" stroke="#1b4f86" strokeWidth="1" fill="none" />
        <path d="M18 42q16 14 33 0M23 23v4M47 23v4" stroke="#17243a" strokeWidth="2" fill="none" strokeLinecap="round" />
      </>
    ),
  },
  { art: <g transform="translate(7 7)"><SiriArt /></g> },
  {
    art: (
      <>
        <defs><linearGradient id="rkt" x1="0" y1="0" x2="0" y2="1"><stop offset="0" stopColor="#cfdde2" /><stop offset="1" stopColor="#7d8082" /></linearGradient></defs>
        <circle cx="35" cy="35" r="27.500" fill="url(#rkt)" stroke="#c5cdd1" strokeWidth="2" />
        <path d="M52 18c-12 1-20 5-25 12-5 0-9 1-12 8l8-1 10 10-1 9c6-3 9-7 9-13 7-5 11-13 11-25z" fill="#3f4347" />
        <circle cx="41" cy="29" r="3.500" fill="#c3cfd4" />
        <path d="M21 43c-3 3-4 7-4 12 5 0 8-2 9-6l-1 1c-1-1-3-3-4-7z" fill="#3f4347" />
      </>
    ),
  },
  {
    art: (
      <>
        <defs><radialGradient id="saf"><stop offset="0" stopColor="#12c5f0" /><stop offset="1" stopColor="#1c6fe8" /></radialGradient></defs>
        <circle cx="35" cy="35" r="28.500" fill="#f1f3f5" />
        <circle cx="35" cy="35" r="26.500" fill="url(#saf)" />
        <circle cx="35" cy="35" r="23.500" fill="none" stroke="#d8ecff" strokeWidth="3.500" strokeDasharray="0.800 1.600" />
        <path d="M54 17L39 38l-6-6z" fill="#e8202c" />
        <path d="M18 53l15-21 6 6z" fill="#f3f3f3" />
        <path d="M18 53L33 32l2 2z" fill="#c9cdd0" />
      </>
    ),
  },
  { dot: true, art: <><Bird /><circle cx="54" cy="51" r="13" fill="none" stroke="#3f4e5c" strokeWidth="3" opacity="0.45" /><circle cx="54" cy="51" r="8" fill="#3f4e5c" opacity="0.35" /></> },
  {
    art: (
      <>
        <path d="M49 9h5l1 13h-6z" fill="#d8dde2" /><path d="M50 22h6l1 12h-7z" fill="#5ec3dc" /><path d="M51 34h7l1 11h-8z" fill="#3cc45e" /><path d="M52 44h7l1 10-8 2z" fill="#f2a01f" />
        <path d="M8 10L46 4q3 0 4 3l6 50-39 8q-3 0-4-3z" fill="#b27c3e" />
        <path d="M8 10l5-1 7 55-3 1q-3 0-4-3z" fill="#94642c" />
        <circle cx="32" cy="31" r="14" fill="#a8743a" stroke="#8f6230" strokeWidth="1.500" />
        <circle cx="32" cy="27" r="5" fill="#8f6230" /><path d="M22 39q10-13 20-2-8 10-20 2z" fill="#8f6230" />
      </>
    ),
  },
  {
    art: (
      <>
        <path d="M6 15l49-7 7 47-50 8z" fill="#5c6a74" /><path d="M11 61l48-6" stroke="#a9b5bd" strokeWidth="2" />
        <path d="M8 14l42-8 7 48-42 7z" fill="#fff" />
        <path d="M8 14l42-8 2 14-42 7z" fill="#e3504c" />
        <text x="30" y="20" textAnchor="middle" fontFamily={sans} fontSize="10.500" fill="#fff" transform="rotate(-8 30 16)">SEP</text>
        <text x="34" y="51" textAnchor="middle" fontFamily={sans} fontSize="29" fontWeight="300" fill="#222">5</text>
      </>
    ),
  },
  {
    art: (
      <>
        <path d="M9 11l43-5 8 52-43 7z" fill="#fdfdf6" stroke="#d8d2b0" />
        <path d="M9 11l43-5 2 12-43 5z" fill="#fdc72a" />
        <path d="M13 29l43-5M14 35l43-5M15 41l42-5M16 47l42-5M17 53l42-5M17 59l42-5" stroke="#cfcfc6" />
      </>
    ),
  },
  {
    art: (
      <>
        <path d="M11 12l36-6q5 0 6 4l6 44q0 4-4 5l-36 5q-5 0-5-4L8 17q0-4 3-5z" fill="#fcfcfc" stroke="#d0d0d0" />
        <path d="M22 21l27-4M23 31l27-4M25 42l27-4M27 52l27-4" stroke="#d4d4d4" />
        <circle cx="16" cy="21" r="3.500" fill="#ff8d1c" /><circle cx="17" cy="31" r="3.500" fill="#1ba0f2" /><circle cx="19" cy="42" r="3.500" fill="#4ec937" /><circle cx="21" cy="52" r="3.500" fill="#c768d8" />
      </>
    ),
  },
  {
    art: (
      <>
        <path d="M6 14l46-7 7 48-45 8z" fill="#f2ecda" stroke="#fff" strokeWidth="2" />
        <path d="M8 16l30-4 1 8-30 4z" fill="#7dc352" /><path d="M42 10l9-1 1 7-8 1z" fill="#f4b9c4" />
        <path d="M10 27l34-5 5 33" fill="none" stroke="#54a7ea" strokeWidth="4" />
        <path d="M13 40l14-5 8 22-18 3z" fill="#f6cf4c" />
        <path d="M18 29l14-2v9l-7 5-7-4z" fill="#4a7bd0" /><path d="M18 29l14-2v3l-14 2z" fill="#d94a44" />
        <text x="25" y="37" textAnchor="middle" fontFamily={sans} fontSize="6.500" fill="#fff">280</text>
        <circle cx="51" cy="46" r="14" fill="#f7f7f7" stroke="#b8bcc0" strokeWidth="1.500" />
        <text x="51" y="50" textAnchor="middle" fontFamily={sans} fontSize="10" fill="#333">3D</text>
        <path d="M51 33l2.500 4h-5z" fill="#e03a30" />
      </>
    ),
  },
  {
    art: (
      <>
        <circle cx="35" cy="35" r="28" fill="#f6f6f6" />
        {["#f6a11b", "#d9d42c", "#8cc63f", "#3fb68b", "#5aa7e0", "#8b7bc8", "#c05ca8", "#ee4f45"].map((c, i) => (
          <rect key={c} x="28" y="11" width="14" height="23" rx="7" fill={c} opacity="0.82" transform={`rotate(${i * 45} 35 35)`} />
        ))}
      </>
    ),
  },
  {
    dot: true,
    art: (
      <>
        <path d="M34 10c15 0 27 9 27 22S49 54 34 54c-3 0-5 0-8-1q-4 5-10 6 4-5 3-10C12 45 7 39 7 32c0-13 12-22 27-22z" fill="#2c9bf7" />
        <path d="M45 33c10 0 17 6 17 14 0 4-2 8-5 10q0 4 2 6-5-1-8-4c-13 3-23-3-23-12 0-8 7-14 17-14z" fill="#f3f7fb" />
        <circle cx="37" cy="46" r="3" fill="#19549a" /><circle cx="45.500" cy="46" r="3" fill="#19549a" /><circle cx="54" cy="46" r="3" fill="#19549a" />
      </>
    ),
  },
  {
    art: (
      <>
        <rect x="6" y="10" width="56" height="46" rx="8" fill="#1fd04a" />
        <rect x="13" y="22" width="27" height="22" rx="5" fill="#fff" /><path d="M42 30l10-6v18l-10-6z" fill="#fff" />
        <circle cx="50" cy="46" r="14" fill="#f4f4f4" />
        <path d="M43 39q2-3 4 0l2 4-2 2q1 4 5 6l3-1 3 3q2 2-2 3-13 0-13-17z" fill="#22c04a" />
        <circle cx="54" cy="14" r="12" fill="#f23b37" />
        <text x="54" y="19" textAnchor="middle" fontFamily={sans} fontSize="14" fill="#fff">30</text>
      </>
    ),
  },
  {
    art: (
      <>
        <path d="M8 12l44-7 7 50-43 9z" fill="#fbfbfb" /><path d="M8 12l44-7 2 11-44 6z" fill="#f7941e" />
        <text x="21" y="19" textAnchor="middle" fontFamily={sans} fontSize="8" fill="#ffe0b8" transform="rotate(-8 21 16)">PAGES</text>
        <path d="M14 24l18-2 2 15-18 2z" fill="#2f9be3" /><path d="M20 26l8 2-4 8z" fill="#f7941e" />
        <path d="M38 22l15-2M39 27l14-2M40 32l14-2M18 44l38-5M19 49l36-5M20 54l30-4" stroke="#bbb" />
        <path d="M56 6l5 2-14 46-5 9 1-10z" fill="#f39a1c" /><path d="M45 46l4 2-5 12-3 3 1-8z" fill="#333" />
      </>
    ),
  },
  {
    art: (
      <>
        <path d="M9 38h52l3 22H6z" fill="#efefef" /><path d="M10 42h4M10 47h4M9 52h4" stroke="#888" strokeWidth="1.500" />
        <path d="M15 36h10v19H15z" fill="#ee3e5a" /><path d="M26 25h10v30H26z" fill="#f99420" /><path d="M38 9h10v46H38z" fill="#2fc552" /><path d="M49 18h10v37H49z" fill="#2796f3" />
      </>
    ),
  },
  {
    art: (
      <>
        <path d="M34 28h3v33h-3z" fill="#c9d3da" /><ellipse cx="35" cy="61" rx="13" ry="4" fill="#c6d8e5" />
        <path d="M12 8h46l4 20H9z" fill="#35a6e6" /><path d="M9 28h53v4H9z" fill="#1579bd" />
        <path d="M19 11h31l2 14H18z" fill="#fff" /><circle cx="30" cy="19" r="5.500" fill="#46b1e1" /><path d="M30 19v-5.500a5.500 5.500 0 0 1 5.500 5.500z" fill="#e84b8a" /><path d="M40 15h9M40 19h9M40 23h9" stroke="#aab" strokeWidth="1.500" />
      </>
    ),
  },
  {
    art: (
      <>
        <defs><linearGradient id="itn" x1="0" y1="1" x2="1" y2="0"><stop offset="0" stopColor="#a04df0" /><stop offset="0.45" stopColor="#e94fb0" /><stop offset="0.7" stopColor="#f0577b" /><stop offset="1" stopColor="#3fb4f5" /></linearGradient></defs>
        <circle cx="35" cy="35" r="26.500" fill="#f9f9fb" stroke="url(#itn)" strokeWidth="3" />
        <path d="M29 47V22l20-4v24" fill="none" stroke="#e0498f" strokeWidth="3.500" /><path d="M29 22l20-4v6l-20 4z" fill="#f0577b" />
        <ellipse cx="25" cy="48" rx="5.500" ry="5" fill="#9a52e8" /><ellipse cx="45" cy="44" rx="5.500" ry="5" fill="#3e8df2" />
      </>
    ),
  },
  {
    art: (
      <>
        <defs><linearGradient id="ibk" x1="0" y1="0" x2="0" y2="1"><stop offset="0" stopColor="#fdae17" /><stop offset="1" stopColor="#e04e06" /></linearGradient></defs>
        <circle cx="35" cy="35" r="28.500" fill="#f2f2f2" /><circle cx="35" cy="35" r="26.500" fill="url(#ibk)" />
        <path d="M17 24q10-5 18 1 8-6 18-1v25q-10-4-18 2-8-6-18-2z" fill="#fff" /><path d="M35 25v26" stroke="#ddd" strokeWidth="1.500" />
      </>
    ),
  },
  {
    art: (
      <>
        <defs><linearGradient id="aps" x1="0" y1="0" x2="0" y2="1"><stop offset="0" stopColor="#1bc0fb" /><stop offset="1" stopColor="#1a63f0" /></linearGradient></defs>
        <circle cx="35" cy="35" r="28.500" fill="#e9eef2" /><circle cx="35" cy="35" r="26.500" fill="url(#aps)" />
        <path d="M37 16L23 48M33 16l14 32M16 38h38" stroke="#fff" strokeWidth="4" fill="none" strokeLinecap="round" />
      </>
    ),
  },
  {
    art: (
      <>
        <rect x="7" y="9" width="56" height="52" rx="2" fill="#a9b2b9" /><path d="M7 36h56v23q0 2-2 2H9q-2 0-2-2z" fill="#7d858c" />
        <circle cx="35" cy="35" r="24" fill="#2c2e30" /><circle cx="35" cy="35" r="19.500" fill="none" stroke="#a5a8ab" strokeWidth="4.500" strokeDasharray="2.500 1.500" />
        <circle cx="35" cy="35" r="15.500" fill="none" stroke="#8e9194" strokeWidth="4" />
        <path d="M35 35V20M35 35l13 8M35 35l-13 8" stroke="#9a9da0" strokeWidth="4" /><circle cx="35" cy="35" r="4" fill="#bfc2c4" />
      </>
    ),
  },
  {
    dot: true,
    art: (
      <>
        <circle cx="35" cy="35" r="30" fill="#fff" /><circle cx="35" cy="35" r="28" fill="#2f9bfb" />
        <rect x="17" y="25" width="24" height="20" rx="5" fill="#fff" /><path d="M43 32l10-7v20l-10-7z" fill="#fff" />
      </>
    ),
  },
  {
    dot: true,
    art: (
      <>
        <path d="M7 12h46v40q-4 7-23 7T7 52z" fill="#9ccb54" />
        <ellipse cx="30" cy="11" rx="23" ry="8" fill="#fff" stroke="#9ccb54" strokeWidth="2" />
        <path d="M7 22q8 7 24 6v4q-16 0-24-6zM7 40q8 6 20 6v4Q14 50 7 44z" fill="#fff" />
        <path d="M50 52l8-2 6 12q-3 5-7 3z" fill="#9ccb54" />
        <circle cx="46" cy="38" r="15" fill="#fff" stroke="#6d9a3a" strokeWidth="2.500" />
      </>
    ),
  },
  {
    dot: true,
    art: (
      <>
        <path d="M10 9h50l5 50q0 3-4 3H9q-4 0-4-3z" fill="#e3e3e3" /><path d="M12 8h46l4 42H8z" fill="#636363" /><path d="M8 50h54v6H8z" fill="#222" />
        <text x="35" y="39" textAnchor="middle" fontFamily={sans} fontSize="30" fontWeight="800" fill="#fd9a22">S</text>
      </>
    ),
  },
  {
    dot: true,
    art: (
      <>
        <path d="M9 34C3 20 10 4 26 8c18-5 35 9 33 28 8 12-2 28-17 25-19 4-36-9-33-27z" fill="#12a5e8" />
        <text x="35" y="50" textAnchor="middle" fontFamily={sans} fontSize="42" fontWeight="800" fill="#fff">S</text>
      </>
    ),
  },
  {
    dot: true,
    art: (
      <>
        <circle cx="35" cy="35" r="29.500" fill="#dd4b3e" />
        <path d="M9.500 20.200A29.500 29.500 0 0 0 34 64.500L45 44l-10 3.500-12-7z" fill="#1fa463" />
        <path d="M61.400 22H38l9 20-13 22.500A29.500 29.500 0 0 0 61.400 22z" fill="#fdd14c" />
        <circle cx="35" cy="35" r="13.500" fill="#fff" /><circle cx="35" cy="35" r="10.500" fill="#4a8af4" />
      </>
    ),
  },
  { dot: true, art: <SlackArt /> },
  { dot: true, art: <PagesSheet /> },
  {
    dot: true,
    art: office(
      "#1f7f4d",
      "X",
      <>
        <path d="M41 18h8v5h-8zM50 18h9v5h-9z" fill="#333" />
        <path d="M41 25h8v5h-8zM50 25h9v5h-9zM41 32h8v5h-8zM50 32h9v5h-9zM41 39h8v5h-8zM50 39h9v5h-9zM41 47h8v5h-8zM50 47h9v5h-9z" fill="#4c9a70" />
      </>
    ),
  },
  {
    dot: true,
    art: (
      <>
        <path d="M34 15l31 2-1 28-34-1z" fill="#fbef7e" /><path d="M22 41l34 3-1 15-32 2z" fill="#faee80" /><path d="M4 16l31-9 8 27-32 11z" fill="#fdf596" />
        <path d="M16 22l10-3M13 38l23-8M16 40l18-6" stroke="#77702f" strokeWidth="1.300" />
        <text x="24" y="30" textAnchor="middle" fontFamily={sans} fontSize="8" fill="#6a6430" transform="rotate(-14 24 28)">555-7361</text>
        <text x="51" y="33" textAnchor="middle" fontFamily={sans} fontSize="8" fill="#e0451c">EGGS</text>
        <text x="38" y="53" textAnchor="middle" fontFamily={sans} fontSize="7" fill="#33406a">MILK</text>
      </>
    ),
  },
  {
    dot: true,
    art: office(
      "#2f5fb3",
      "W",
      <>
        <path d="M40 19h19M40 26h19M40 32h19M40 38h19M40 44h19M40 51h19" stroke="#333" strokeWidth="2.500" />
        <path d="M46 19h7M40 26h8M50 32h9M42 38h9M50 44h9M47 51h9" stroke="#5c8bd6" strokeWidth="2.500" />
      </>
    ),
  },
  {
    dot: true,
    art: (
      <>
        <rect x="7" y="7" width="56" height="56" rx="1" fill="#f2f3f5" />
        {plus(35, 35, 9, "#2a78b0", 2.8)}
        {plus(23.5, 23.5, 7, "#2a78b0", 2.2)}
        {plus(46.5, 23.5, 7, "#2a78b0", 2.2)}
        {plus(23.5, 46.5, 7, "#2a78b0", 2.2)}
        {plus(46.5, 46.5, 7, "#2a78b0", 2.2)}
        {plus(35, 16, 4.5, "#4585b5", 1.6)}
        {plus(35, 54, 4.5, "#4585b5", 1.6)}
        {plus(16, 35, 4.5, "#4585b5", 1.6)}
        {plus(54, 35, 4.5, "#4585b5", 1.6)}
      </>
    ),
  },
];

const Win = ({ bg, children }: { bg: string; children?: React.ReactNode }) => (
  <>
    <rect x="4" y="15" width="62" height="40" fill={bg} />
    <rect x="4" y="15" width="62" height="3" fill="#e9e9e9" />
    <path d="M6 19v34" stroke="#8b9099" strokeWidth="2" strokeDasharray="1 1" />
    <path d="M5 16.500h1.500" stroke="#f55" strokeWidth="1.500" /><path d="M8 16.500h1.500" stroke="#fb3" strokeWidth="1.500" /><path d="M11 16.500h1.500" stroke="#3c5" strokeWidth="1.500" />
    {children}
  </>
);

const MiniSheet = () => (
  <>
    <path d="M46 47l14-2 3 19-14 2z" fill="#fbfbfb" />
    <path d="M64 43l-6 20" stroke="#5f7d9e" strokeWidth="1.800" />
  </>
);

const minis: React.ReactNode[] = [
  <>
    <path d="M10 12h5v40h-5zM52 26h7v26h-7z" fill="#2492d8" /><path d="M19 3h24l13 22v27H19z" fill="#e9e9e9" /><path d="M14 9h28l14 14v41H14z" fill="#fff" /><path d="M40 4l16 20-15-3q4-8-1-17z" fill="#d4d4d4" stroke="#fff" />
    <rect x="23" y="29" width="24" height="26" rx="2" fill="#a3abb0" /><rect x="27" y="30" width="17" height="5" fill="#333" /><circle cx="35" cy="43" r="9" fill="#c0c7cb" stroke="#8d959a" /><rect x="25" y="51" width="20" height="4" fill="#444" />
  </>,
  <Win bg="#dcdcdc"><MiniSheet /></Win>,
  <Win bg="#b1d5fd"><MiniSheet /></Win>,
  <Win bg="#f4f6f8">
    <path d="M4 19h10v36H4z" fill="#e6e9ed" /><path d="M15 22h14v5H15z" fill="#bcd5f2" /><path d="M16 31h12M16 36h12M16 41h12M16 46h12M16 51h12M33 24h26M33 29h20M33 36h24M33 41h18" stroke="#c3c6cb" />
    <g transform="translate(40 38)"><Bird s={0.42} /></g>
  </Win>,
  <>
    <rect x="4" y="10" width="62" height="48" fill="#282923" /><rect x="4" y="10" width="62" height="3" fill="#ddd" /><path d="M9 17h12M9 21h10M12 25h12M13 29h10" stroke="#8d8f80" />
    <g transform="translate(41 39) scale(0.38)"><path d="M10 5h50l5 62H5z" fill="#ddd" /><path d="M12 8h46l4 50H8z" fill="#555" /><text x="35" y="48" textAnchor="middle" fontFamily={sans} fontSize="42" fontWeight="800" fill="#fd9a22">S</text></g>
  </>,
  <>
    <rect x="4" y="12" width="62" height="46" fill="#fff" /><rect x="4" y="12" width="16" height="46" fill="#4d394b" /><path d="M6 18h10M6 22h8M6 30h11M6 35h9M6 40h11M6 45h8" stroke="#8a7a88" /><path d="M4 26h16" stroke="#4cab9a" strokeWidth="2" />
    <path d="M24 18h24M24 23h18M24 47h20" stroke="#c8c8c8" /><path d="M30 27h26v14H30z" fill="none" stroke="#b9cbe4" /><path d="M22 20v3M22 46v4" stroke="#e33" strokeWidth="2" />
    <g transform="translate(40 40) scale(0.38)"><SlackArt /></g>
  </>,
  <>
    <rect x="4" y="13" width="62" height="44" fill="#fbfbfb" /><rect x="4" y="13" width="23" height="44" fill="#ececec" /><path d="M11 20h14M11 27h12M11 34h14M11 41h12M11 48h14" stroke="#b5b5b5" /><circle cx="7" cy="20" r="1.500" fill="#889" /><circle cx="7" cy="27" r="1.500" fill="#889" /><circle cx="7" cy="34" r="1.500" fill="#889" /><circle cx="7" cy="41" r="1.500" fill="#889" />
    <path d="M55 19h10M57 24h8M60 31h5M60 36h5" stroke="#2c9bf7" strokeWidth="3" /><path d="M30 25h14M30 33h12M30 40h8" stroke="#888" />
    <circle cx="55" cy="54" r="10" fill="#2c9bf7" /><circle cx="59" cy="58" r="6.500" fill="#f3f7fb" /><path d="M55.500 58h2M58.500 58h2M61 58h2" stroke="#19549a" strokeWidth="2" />
  </>,
  <>
    <path d="M12 11h46l-6 48q-1 4-17 4t-17-4z" fill="#e3e5e6" opacity="0.92" /><path d="M20 14l4 46M50 14l-4 46" stroke="#c9ccce" strokeWidth="3" opacity="0.7" />
    <ellipse cx="35" cy="11.500" rx="23" ry="5" fill="#b2b5b6" stroke="#f2f3f4" strokeWidth="2" />
  </>,
];

function DockTile({ art, dot }: { art: React.ReactNode; dot?: boolean }) {
  return (
    <div className="flex w-[70px] shrink-0 flex-col items-center pt-[6px]">
      <svg width="70" height="70" viewBox="0 0 70 70" className="block overflow-visible">{art}</svg>
      <div className={`-mt-[1px] size-[9px] rounded-full ${dot ? "bg-black" : ""}`} />
    </div>
  );
}

function Dock() {
  return (
    <div className="mt-[4px] ml-[52px] flex h-[88px] w-[2776px] rounded-t-[12px] bg-[linear-gradient(90deg,#565654,#545752_30%,#595957_60%,#5a5c56)] pl-[7px]">
      {dock.map((d, i) => (
        <DockTile key={i} {...d} />
      ))}
      <div className="mt-[12px] ml-[16px] h-[64px] w-[2px] shrink-0 bg-[#333533]" />
      <div className="w-[14px] shrink-0" />
      {minis.map((m, i) => (
        <DockTile key={i} art={m} />
      ))}
    </div>
  );
}

export default function App() {
  return (
    <div className="h-[1800px] w-[2880px] overflow-hidden bg-[#0a100c] font-['Inter','Liberation_Sans',sans-serif]">
      <MenuBar />
      <div className="flex h-[1662px] flex-col overflow-hidden rounded-[10px] bg-[#f4f4f4]">
        <TitleBar />
        <Toolbar />
        <div className="flex h-[1436px] shrink-0">
          <DataPane />
          <Cards />
          <Workspace />
        </div>
        <SheetTabs />
        <StatusBar />
      </div>
      <Dock />
    </div>
  );
}
